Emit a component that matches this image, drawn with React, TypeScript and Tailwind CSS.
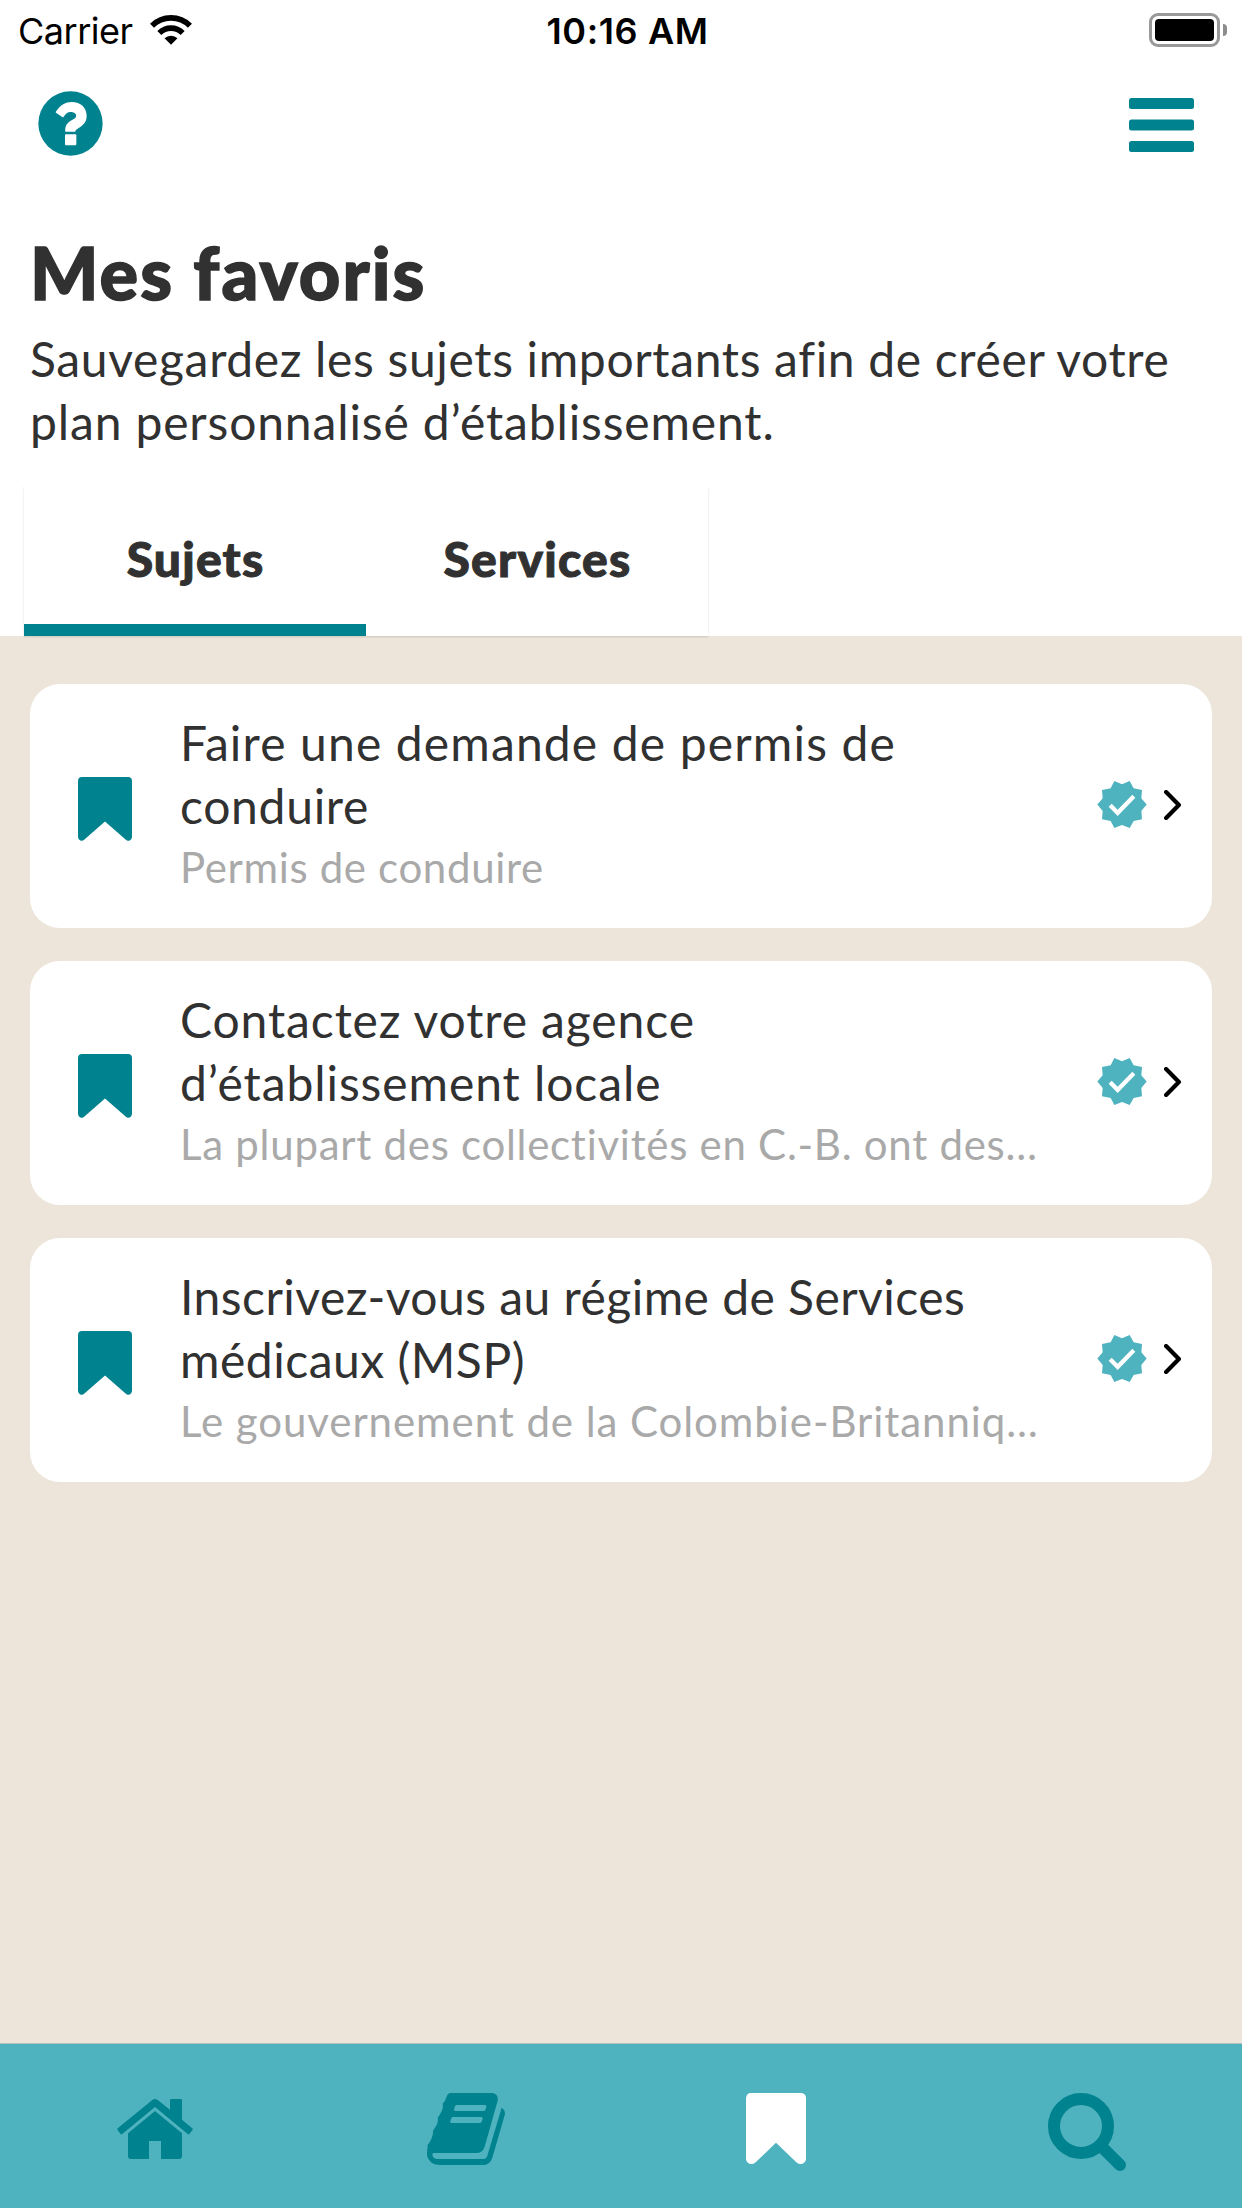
type Line = { text: string; spacing: string };
type Topic = { title: Line[]; summary: Line };

const topics: Topic[] = [
  {
    title: [
      { text: "Faire une demande de permis de", spacing: "tracking-[1.14px]" },
      { text: "conduire", spacing: "tracking-[0.7px]" },
    ],
    summary: { text: "Permis de conduire", spacing: "tracking-[0.65px]" },
  },
  {
    title: [
      { text: "Contactez votre agence", spacing: "tracking-[0.9px]" },
      { text: "d’établissement locale", spacing: "tracking-[0.92px]" },
    ],
    summary: { text: "La plupart des collectivités en C.-B. ont des…", spacing: "tracking-[0.72px]" },
  },
  {
    title: [
      { text: "Inscrivez-vous au régime de Services", spacing: "tracking-[0.46px]" },
      { text: "médicaux (MSP)", spacing: "tracking-[0.5px]" },
    ],
    summary: { text: "Le gouvernement de la Colombie-Britanniq…", spacing: "tracking-[0.93px]" },
  },
];

function WifiIcon() {
  return (
    <svg className="mt-[15px] ml-[17px] h-[30px] w-[42px]" viewBox="450 45 126 90" fill="none" stroke="#000" strokeWidth="17">
      <path d="M456.1 77.1A80.5 80.5 0 0 1 569.9 77.1" />
      <path d="M478 99A49.5 49.5 0 0 1 548 99" />
      <path d="M513 134.500L493.500 115A27.500 27.500 0 0 1 532.500 115Z" fill="#000" stroke="none" />
    </svg>
  );
}

function HelpIcon() {
  return (
    <svg className="h-[65px] w-[65px]" viewBox="116 272 195 195">
      <circle cx="213.500" cy="369.500" r="96.500" fill="#00838f" />
      <path
        fill="#fff"
        d="M169 335C184 313 199 305 217 305C244 305 262 322 262 347C262 367 248 377 238 383C231 387 229 390 228 393Q228 394.500 226 394.500H199Q197.500 394.500 197.500 392C197.500 375 204 367 218 359C227 354 230.500 351 230.500 346C230.500 339 223 335 213 335C205 335 199 341 193 349Q191 351.500 188.500 350L170 337Q168.500 336 169 335Z"
      />
      <rect x="197" y="402" width="34" height="33" rx="3" fill="#fff" />
    </svg>
  );
}

function BadgeIcon() {
  return (
    <svg className="-mt-[3px] h-[47px] w-[50px] shrink-0" viewBox="172 363 148 141">
      <path
        fill="#4fb3bf"
        d="M172 433.500L188 415 186 390 212 385 223 363 246 373 269 363 281 385 306 390 304 415 320 433.500 304 453 306 478 281 483 269 504 246 495 223 504 212 483 186 478 188 453Z"
      />
      <path fill="#fff" d="M206 440L215 431 233 449 277 404 286 413 233 468Z" />
    </svg>
  );
}

function TopicCard({ title, summary }: Topic) {
  return (
    <li className="flex h-[244px] items-center rounded-[30px] bg-white pr-[31px] pl-[48px]">
      <svg className="mt-[5px] h-[64px] w-[54px] shrink-0" viewBox="0 0 54 64" fill="#00838f">
        <path d="M4 0H50Q54 0 54 4V59.500C54 63.500 50 65.500 47 62L27 44.500 7 62C4 65.500 0 63.500 0 59.500V4Q0 0 4 0Z" />
      </svg>
      <div className="-mt-[6px] ml-[48px] flex-1 whitespace-nowrap text-[#313131]">
        <h2 className="text-[48px] leading-[63px]">
          {title.map((line) => (
            <span key={line.text} className={`block ${line.spacing}`}>{line.text}</span>
          ))}
        </h2>
        <p className={`mt-[2px] text-[42px] leading-[56px] text-[#a9a9a9] ${summary.spacing}`}>{summary.text}</p>
      </div>
      <BadgeIcon />
      <svg className="-mt-[3px] ml-[17px] h-[30px] w-[17px] shrink-0" viewBox="0 0 17 30" fill="none" stroke="#000" strokeWidth="4.200" strokeLinecap="round" strokeLinejoin="round">
        <path d="M2.100 2.100L14.900 15 2.100 27.900" />
      </svg>
    </li>
  );
}

export default function App() {
  return (
    <div className="flex h-[2208px] w-[1242px] flex-col overflow-hidden bg-white font-['Lato',sans-serif]">
      <div className="grid h-[60px] grid-cols-[1fr_auto_1fr] font-['Inter',sans-serif] text-[36px] leading-[40px] text-black">
        <div className="flex items-start pl-[18px]">
          <span className="mt-[11px] tracking-[-0.5px]">Carrier</span>
          <WifiIcon />
        </div>
        <span className="mt-[11px] ml-[13px] font-semibold tracking-[0.6px]">10:16 AM</span>
        <div className="flex items-start justify-end pt-[13px] pr-[15px]">
          <div className="h-[34px] w-[71px] rounded-[9px] border-[3px] border-[#999] p-[3px]">
            <div className="h-full rounded-[4px] bg-black" />
          </div>
          <div className="mt-[11px] ml-[3px] h-[12px] w-[4px] rounded-r-full bg-[#8c8c8c]" />
        </div>
      </div>

      <div className="flex h-[168px] items-start justify-between pt-[31px] pr-[48px] pl-[38px]">
        <HelpIcon />
        <svg className="mt-[7px] h-[54px] w-[65px]" viewBox="0 0 65 54" fill="#00838f">
          <rect x="0" y="0" width="65" height="11" rx="2.500" />
          <rect x="0" y="21.500" width="65" height="11" rx="2.500" />
          <rect x="0" y="43" width="65" height="11" rx="2.500" />
        </svg>
      </div>

      <header className="h-[258px] pl-[30px] whitespace-nowrap text-[#313131]">
        <h1 className="text-[72px] leading-[88px] font-black tracking-[2.1px] [-webkit-text-stroke:1.500px_#313131]">Mes favoris</h1>
        <p className="mt-[11px] text-[48px] leading-[63px]">
          <span className="block tracking-[0.65px]">Sauvegardez les sujets importants afin de créer votre</span>
          <span className="block tracking-[0.85px]">plan personnalisé d’établissement.</span>
        </p>
      </header>

      <main className="flex-1 bg-[#ede5d9]">
        <div className="bg-white pl-[24px]">
          <div className="grid h-[150px] w-[684px] grid-cols-2 bg-white text-center text-[48px] leading-[63px] font-black text-[#313131] shadow-[0_1px_2px_rgba(0,0,0,0.14)] [-webkit-text-stroke:1px_#313131] [clip-path:inset(0_-4px_-4px_-4px)]">
            <div className="border-b-[12px] border-[#00838f] pt-[41px] pl-[1px] tracking-[1.2px]">Sujets</div>
            <div className="pt-[41px] pl-[1px] tracking-[1.25px]">Services</div>
          </div>
        </div>
        <ul className="flex flex-col gap-[33px] px-[30px] pt-[48px]">
          {topics.map((topic) => (
            <TopicCard key={topic.summary.text} {...topic} />
          ))}
        </ul>
      </main>

      <nav className="grid h-[165px] grid-cols-4 items-start justify-items-center border-t border-[#b5c3c0] bg-[#4fb3bf] pt-[49px]">
        <svg className="mt-[6px] h-[60px] w-[76px]" viewBox="111 207 228 180" fill="#00838f">
          <path d="M144 310L225 243 306 310V378Q306 387 297 387H243V333H207V387H153Q144 387 144 378Z" />
          <path d="M217 210Q225 204 233 210L270 239V211Q270 207 274 207H302Q306 207 306 211V269L336 294Q340 297 337 301L329 311Q326 315 322 311L225 231 128 311Q124 315 121 311L113 301Q110 297 114 294Z" />
        </svg>
        <svg className="h-[72px] w-[78px]" viewBox="1041 189 234 216">
          <path
            fill="#00838f"
            d="M1112 189H1236Q1256 191 1253 212L1214 350Q1208 369 1188 369H1062Q1056 370 1057 375Q1060 387 1073 387H1208Q1219 387 1222 377L1263 240V233Q1275 237 1275 252L1237 383Q1230 405 1208 405H1079Q1051 405 1042 380Q1040 373 1042 358Q1044 350 1042 346L1048 338C1055 326 1060 315 1059 302L1066 292C1073 280 1075 271 1073 263L1080 253C1088 240 1090 230 1088 221L1094 214C1101 202 1100 189 1112 189Z"
          />
          <path fill="#4fb3bf" d="M1131 225H1215Q1220 225 1219 230L1216 239Q1215 243 1210 243H1126Q1121 243 1122 238L1125 229Q1126 225 1131 225ZM1119 261H1204Q1209 261 1208 266L1205 275Q1203 279 1198 279H1115Q1109 279 1111 274L1114 265Q1115 261 1119 261Z" />
        </svg>
        <svg className="h-[71px] w-[60px]" viewBox="138 189 180 213" fill="#fff">
          <path d="M153 189H303Q318 191 318 204V386C318 400 301 408 289 397L228 338 167 397C155 408 138 400 138 386V204Q140 189 153 189Z" />
        </svg>
        <svg className="h-[78px] w-[78px]" viewBox="1044 189 234 234" fill="none" stroke="#00838f" strokeWidth="36">
          <circle cx="1143" cy="288" r="81" />
          <path d="M1205 350L1260 405" strokeLinecap="round" />
        </svg>
      </nav>
    </div>
  );
}
